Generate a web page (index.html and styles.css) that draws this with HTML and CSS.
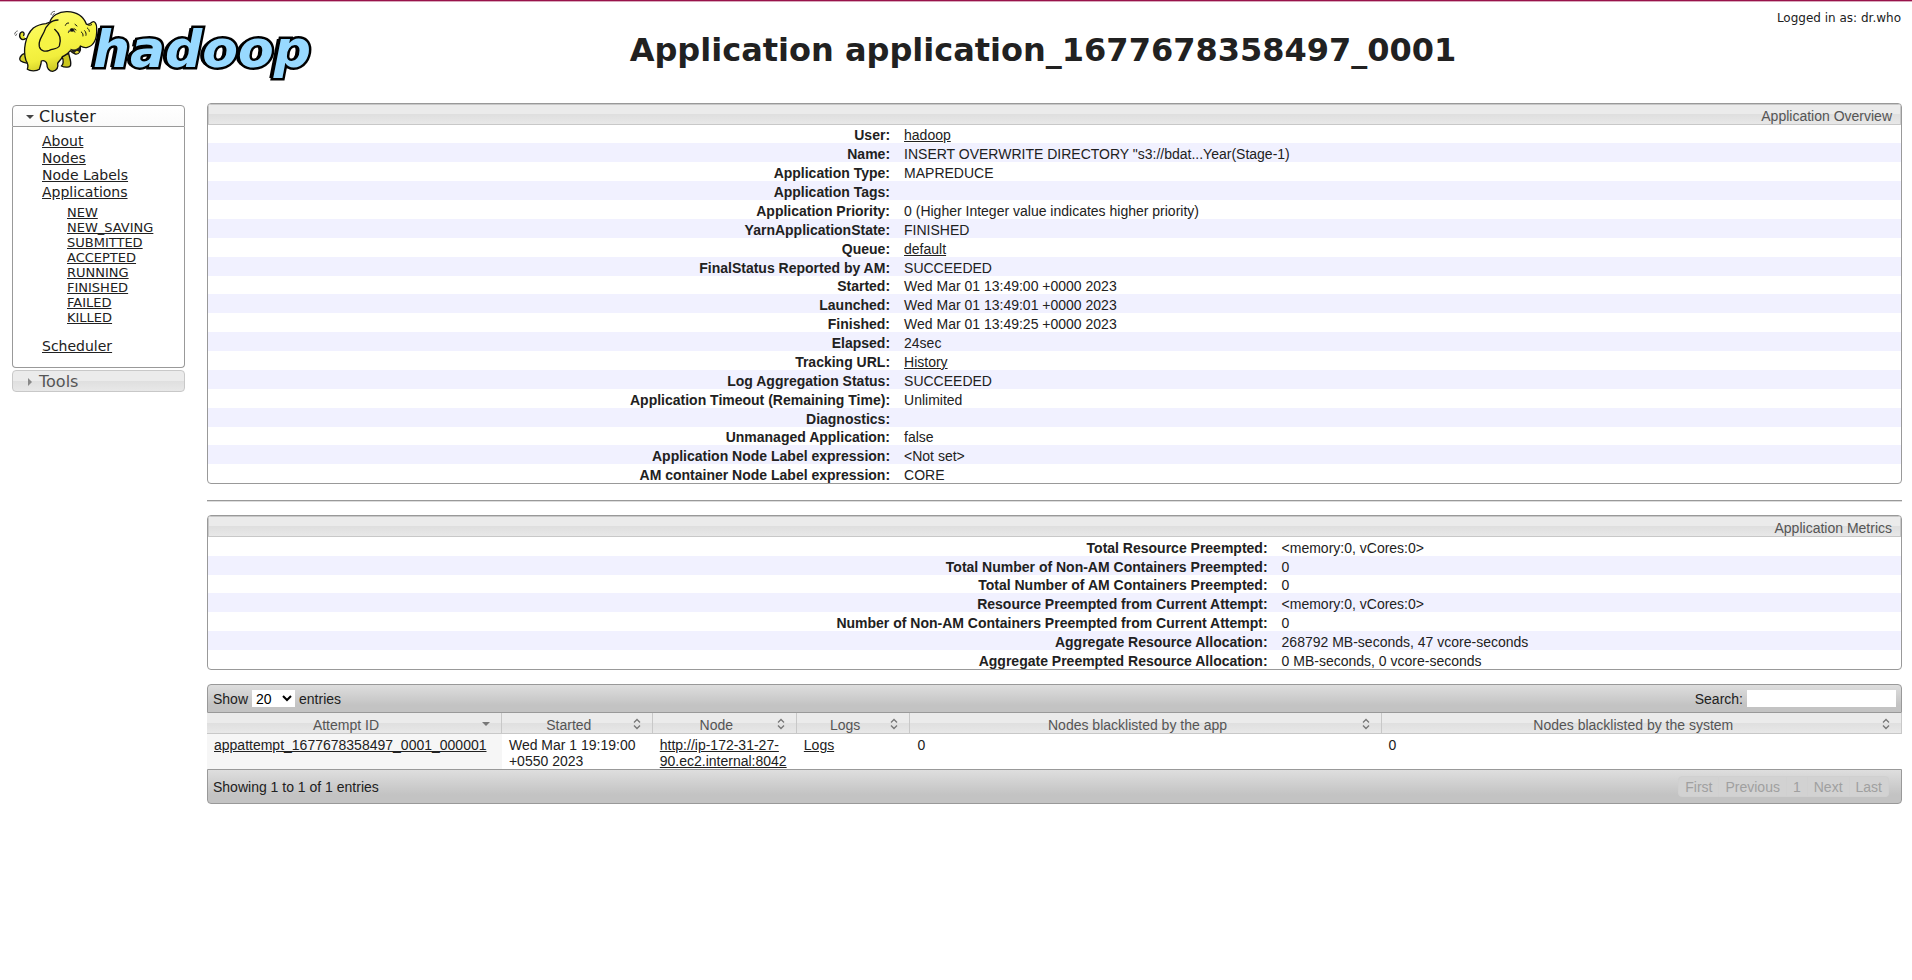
FILE: index.html
```html
<!DOCTYPE html>
<html lang="en">
<head>
<meta charset="utf-8">
<title>Application application_1677678358497_0001</title>
<link rel="stylesheet" href="styles.css">
</head>
<body>
<header class="masthead">
  <a class="logo" href="#" aria-label="Hadoop home">
    <svg class="elephant" viewBox="36 24 270 198" aria-hidden="true">
      <defs>
        <linearGradient id="skin" x1="0" y1="0" x2="0.3" y2="1">
          <stop offset="0" stop-color="#fdfc7a"/>
          <stop offset="0.5" stop-color="#f8f648"/>
          <stop offset="0.8" stop-color="#f1ee3c"/>
          <stop offset="1" stop-color="#cfcb25"/>
        </linearGradient>
      </defs>
      <g stroke="#111" stroke-linejoin="round" stroke-linecap="round">
        <path d="M77 116C64 124 56 112 60 101C65 91 76 97 71 106" fill="#e3e02e" stroke-width="4"/>
        <path d="M76 160C62 162 54 178 64 184C70 189 78 188 84 190Z" fill="#d8d428" stroke-width="4"/>
        <path d="M186 170C192 182 190 194 184 198C196 204 212 202 212 194C214 184 208 172 206 160Z" fill="#c9c51d" stroke-width="4"/>
        <path d="M150 66C154 48 176 34 202 35C228 36 250 48 259 72C264 76 272 70 277 66C284 62 291 72 290 86C292 118 280 138 262 142C254 144 246 141 241 138C243 152 238 164 226 162C218 160 214 156 211 152C200 166 194 166 187 170C184 178 176 184 173 190C176 204 170 211 158 214C148 214 140 204 141 194C140 184 132 180 124 183C124 192 120 200 118 208C110 214 90 214 82 208C86 196 84 190 78 182C68 150 76 106 100 84C112 76 126 72 138 71Z" fill="url(#skin)" stroke-width="4"/>
        <path d="M174 60C154 60 138 76 132 96C126 110 114 122 118 140C122 154 136 156 148 151C158 146 172 148 178 138C184 120 180 102 164 88" fill="#f6f445" stroke-width="4"/>
        <path d="M213 148C224 152 232 148 240 140C242 152 236 162 226 160C218 158 216 154 213 148Z" fill="#222" stroke-width="2"/>
        <path d="M224 158C228 152 234 152 237 156C234 161 228 162 224 158Z" fill="#e8dd3a" stroke="none"/>
        <path d="M205 97C208 84 220 83 225 97C220 90 212 90 205 97Z" fill="#fff" stroke-width="2"/>
        <ellipse cx="216" cy="90" rx="6" ry="5" fill="#111" stroke="none"/>
        <path d="M196 76C198 70 203 68 206 69M225 73L231 78M244 96C248 98 250 104 249 108M254 92C258 96 259 102 258 106M262 84C266 87 268 90 268 94M222 86L228 90M262 74C266 77 270 77 275 74" fill="none" stroke-width="3"/>
        <path d="M153 44C153 38 158 34 164 34M158 46L163 40M44 102C45 97 48 94 52 93M47 107L50 102" fill="none" stroke-width="2"/>
      </g>
    </svg>
    <span class="wordmark">hadoop</span>
  </a>
  <h1 class="title">Application application_1677678358497_0001</h1>
  <div class="user">Logged in as: dr.who</div>
</header>

<div class="page">
  <nav class="sidebar">
    <button class="section open" type="button" aria-expanded="true"><svg class="arrow" viewBox="0 0 8 8" aria-hidden="true"><path d="M0 2h8L4 6z" fill="#444"/></svg>Cluster</button>
    <div class="section-body">
      <ul class="menu">
        <li><a href="#">About</a></li>
        <li><a href="#">Nodes</a></li>
        <li><a href="#">Node Labels</a></li>
        <li><a href="#">Applications</a>
          <ul class="submenu">
            <li><a href="#">NEW</a></li>
            <li><a href="#">NEW_SAVING</a></li>
            <li><a href="#">SUBMITTED</a></li>
            <li><a href="#">ACCEPTED</a></li>
            <li><a href="#">RUNNING</a></li>
            <li><a href="#">FINISHED</a></li>
            <li><a href="#">FAILED</a></li>
            <li><a href="#">KILLED</a></li>
          </ul>
        </li>
        <li><a href="#">Scheduler</a></li>
      </ul>
    </div>
    <button class="section closed" type="button" aria-expanded="false"><svg class="arrow" viewBox="0 0 8 8" aria-hidden="true"><path d="M2 0v8l4-4z" fill="#888"/></svg>Tools</button>
  </nav>

  <main class="content">
    <section class="panel">
      <h2 class="panel-title">Application Overview</h2>
      <table class="facts overview">
        <tbody>
        <tr><th scope="row">User:</th><td><a href="#">hadoop</a></td></tr>
        <tr><th scope="row">Name:</th><td>INSERT OVERWRITE DIRECTORY "s3://bdat...Year(Stage-1)</td></tr>
        <tr><th scope="row">Application Type:</th><td>MAPREDUCE</td></tr>
        <tr><th scope="row">Application Tags:</th><td></td></tr>
        <tr><th scope="row">Application Priority:</th><td>0 (Higher Integer value indicates higher priority)</td></tr>
        <tr><th scope="row">YarnApplicationState:</th><td>FINISHED</td></tr>
        <tr><th scope="row">Queue:</th><td><a href="#">default</a></td></tr>
        <tr><th scope="row">FinalStatus Reported by AM:</th><td>SUCCEEDED</td></tr>
        <tr><th scope="row">Started:</th><td>Wed Mar 01 13:49:00 +0000 2023</td></tr>
        <tr><th scope="row">Launched:</th><td>Wed Mar 01 13:49:01 +0000 2023</td></tr>
        <tr><th scope="row">Finished:</th><td>Wed Mar 01 13:49:25 +0000 2023</td></tr>
        <tr><th scope="row">Elapsed:</th><td>24sec</td></tr>
        <tr><th scope="row">Tracking URL:</th><td><a href="#">History</a></td></tr>
        <tr><th scope="row">Log Aggregation Status:</th><td>SUCCEEDED</td></tr>
        <tr><th scope="row">Application Timeout (Remaining Time):</th><td>Unlimited</td></tr>
        <tr><th scope="row">Diagnostics:</th><td></td></tr>
        <tr><th scope="row">Unmanaged Application:</th><td>false</td></tr>
        <tr><th scope="row">Application Node Label expression:</th><td>&lt;Not set&gt;</td></tr>
        <tr><th scope="row">AM container Node Label expression:</th><td>CORE</td></tr>
        </tbody>
      </table>
    </section>

    <hr class="rule">

    <section class="panel">
      <h2 class="panel-title">Application Metrics</h2>
      <table class="facts metrics">
        <tbody>
        <tr><th scope="row">Total Resource Preempted:</th><td>&lt;memory:0, vCores:0&gt;</td></tr>
        <tr><th scope="row">Total Number of Non-AM Containers Preempted:</th><td>0</td></tr>
        <tr><th scope="row">Total Number of AM Containers Preempted:</th><td>0</td></tr>
        <tr><th scope="row">Resource Preempted from Current Attempt:</th><td>&lt;memory:0, vCores:0&gt;</td></tr>
        <tr><th scope="row">Number of Non-AM Containers Preempted from Current Attempt:</th><td>0</td></tr>
        <tr><th scope="row">Aggregate Resource Allocation:</th><td>268792 MB-seconds, 47 vcore-seconds</td></tr>
        <tr><th scope="row">Aggregate Preempted Resource Allocation:</th><td>0 MB-seconds, 0 vcore-seconds</td></tr>
        </tbody>
      </table>
    </section>

    <section class="attempts">
      <div class="bar bar-top">
        <label class="length">Show
          <select class="length-select"><option>20</option><option>40</option><option>60</option><option>80</option><option>100</option></select>
          entries</label>
        <label class="search">Search: <input class="search-input" type="text"></label>
      </div>
      <table class="grid">
        <colgroup><col class="c-id"><col class="c-started"><col class="c-node"><col class="c-logs"><col class="c-app"><col class="c-system"></colgroup>
        <thead>
          <tr>
            <th scope="col"><div class="head"><span>Attempt ID</span><svg viewBox="0 0 16 16" aria-hidden="true"><path d="M4 5h8l-4 4z" fill="#777"/></svg></div></th>
            <th scope="col"><div class="head"><span>Started</span><svg viewBox="0 0 16 16" aria-hidden="true"><path d="M5 5.500l3-3 3 3M5 8.500l3 3 3-3" fill="none" stroke="#777" stroke-width="1.400"/></svg></div></th>
            <th scope="col"><div class="head"><span>Node</span><svg viewBox="0 0 16 16" aria-hidden="true"><path d="M5 5.500l3-3 3 3M5 8.500l3 3 3-3" fill="none" stroke="#777" stroke-width="1.400"/></svg></div></th>
            <th scope="col"><div class="head"><span>Logs</span><svg viewBox="0 0 16 16" aria-hidden="true"><path d="M5 5.500l3-3 3 3M5 8.500l3 3 3-3" fill="none" stroke="#777" stroke-width="1.400"/></svg></div></th>
            <th scope="col"><div class="head"><span>Nodes blacklisted by the app</span><svg viewBox="0 0 16 16" aria-hidden="true"><path d="M5 5.500l3-3 3 3M5 8.500l3 3 3-3" fill="none" stroke="#777" stroke-width="1.400"/></svg></div></th>
            <th scope="col"><div class="head"><span>Nodes blacklisted by the system</span><svg viewBox="0 0 16 16" aria-hidden="true"><path d="M5 5.500l3-3 3 3M5 8.500l3 3 3-3" fill="none" stroke="#777" stroke-width="1.400"/></svg></div></th>
          </tr>
        </thead>
        <tbody>
          <tr>
            <td class="sorted"><a href="#">appattempt_1677678358497_0001_000001</a></td>
            <td>Wed Mar 1 19:19:00 +0550 2023</td>
            <td><a href="#">http://ip-172-31-27-90.ec2.internal:8042</a></td>
            <td><a href="#">Logs</a></td>
            <td>0</td>
            <td>0</td>
          </tr>
        </tbody>
      </table>
      <div class="bar bar-bottom">
        <div>Showing 1 to 1 of 1 entries</div>
        <div class="pager">
          <button type="button" disabled>First</button>
          <button type="button" disabled>Previous</button>
          <button type="button" disabled>1</button>
          <button type="button" disabled>Next</button>
          <button type="button" disabled>Last</button>
        </div>
      </div>
    </section>
  </main>
</div>
</body>
</html>
```
FILE: styles.css
```css
* { box-sizing: border-box; }

body {
  margin: 0;
  border-top: 1px solid #98134a;
  background: #fff;
  color: #212121;
  font: 14px/16px "Liberation Sans", Arial, sans-serif;
}

a { color: #212121; }

.masthead {
  display: grid;
  grid-template-columns: 207px 1fr;
  align-items: start;
  height: 102px;
  border-top: 1px solid #d9a9bc;
  font-family: "DejaVu Sans", Verdana, sans-serif;
  position: relative;
}

.logo {
  display: flex;
  align-items: flex-start;
  padding: 6px 0 0 12px;
  text-decoration: none;
}

.elephant {
  flex: none;
  width: 90px;
  height: 66px;
  position: relative;
  z-index: 1;
}

.wordmark {
  margin: 15px 0 0 -9px;
  color: #98d9ff;
  font: italic bold 52px/52px "DejaVu Sans", Verdana, sans-serif;
  -webkit-text-stroke: 5px #000;
  paint-order: stroke fill;
  text-shadow: -1px 0 #000, -2px 0 #000, -3px 0 #000, -4px 0 #000;
}

.title {
  margin: 29px 0 0;
  padding-right: 33px;
  text-align: center;
  font-size: 32px;
  line-height: 38px;
}

.user {
  position: absolute;
  top: 8px;
  right: 11px;
  font-size: 12px;
}

.page {
  display: grid;
  grid-template-columns: 173px 1fr;
  column-gap: 22px;
  padding: 0 10px 0 12px;
}

.sidebar {
  padding-top: 2px;
  font-family: "DejaVu Sans", Verdana, sans-serif;
}

.section {
  display: flex;
  align-items: center;
  gap: 5px;
  width: 100%;
  height: 22px;
  padding: 2px 13px 0;
  font: 16px/18px "DejaVu Sans", Verdana, sans-serif;
}

.arrow { width: 8px; height: 8px; }

.open {
  border: 1px solid #999;
  border-radius: 4px 4px 0 0;
  background: linear-gradient(#fff, #fafafa);
  color: #212121;
}

.closed {
  margin-top: 2px;
  border: 1px solid #c8c8c8;
  border-radius: 4px;
  background: linear-gradient(#ebebeb 50%, #dfdfdf 50%, #e8e8e8);
  color: #555;
}

.section-body {
  padding: 6px 0 12px 29px;
  border: 1px solid #999;
  border-top: 0;
  border-radius: 0 0 4px 4px;
}

.menu, .submenu {
  margin: 0;
  padding: 0;
  list-style: none;
}

.menu { line-height: 17px; }

.submenu {
  padding: 4px 0 13px 25px;
  font-size: 13px;
  line-height: 15px;
}

.panel {
  border: 1px solid #999;
  border-radius: 4px;
  overflow: hidden;
}

.panel-title {
  margin: 0;
  padding: 3px 8px 0;
  border: 1px solid #c8c8c8;
  background: linear-gradient(#ebebeb 50%, #dfdfdf 50%, #e8e8e8);
  color: #555;
  font-size: 14px;
  font-weight: normal;
  text-align: right;
}

.facts {
  width: 100%;
  border-collapse: collapse;
}

.facts th, .facts td { padding: 3px 7px 0; }
.facts th { text-align: right; }
.facts tr:nth-child(even) { background: #f1f1ff; }
.overview th { width: 40.7%; }
.metrics th { width: 63%; }

.overview tr:nth-child(8n+1) > *,
.metrics tr:nth-child(3) > * { padding-top: 2px; }

.rule {
  height: 2px;
  margin: 16px 0 13px;
  border: 0;
  border-top: 1px solid #999;
  border-bottom: 1px solid #ddd;
}

.attempts { margin-top: 14px; }

.bar {
  display: flex;
  align-items: center;
  justify-content: space-between;
  border: 1px solid #999;
  background: linear-gradient(#dedede, #c3c3c3 75%, #c3c3c3);
}

.bar-top {
  height: 29px;
  padding: 0 5px;
  border-radius: 4px 4px 0 0;
}

.length, .search {
  display: flex;
  align-items: center;
  gap: 4px;
}

.length-select {
  width: 43px;
  height: 17px;
  padding: 0;
  border: 0;
  background: #fff;
  color: #000;
  font: 14px/17px "Liberation Sans", Arial, sans-serif;
}

.search-input {
  width: 149px;
  height: 17px;
  padding: 0;
  border: 0;
  background: #fff;
}

.grid {
  width: 100%;
  border-collapse: separate;
  border-spacing: 0;
  table-layout: fixed;
}

.c-id { width: 17.4%; }
.c-started { width: 8.9%; }
.c-node { width: 8.5%; }
.c-logs { width: 6.7%; }
.c-app { width: 27.8%; }
.c-system { width: 30.7%; }

.grid th {
  padding: 4px 7px 0;
  border-right: 1px solid #c8c8c8;
  border-bottom: 1px solid #c8c8c8;
  background: linear-gradient(#ebebeb 50%, #dfdfdf 50%, #e8e8e8);
  color: #555;
  font-weight: normal;
}

.head {
  display: grid;
  grid-template-columns: 1fr 16px;
  height: 16px;
}

.grid td {
  padding: 3px 6px 0 7px;
  vertical-align: top;
}

.grid .sorted { background: #f6f6f6; }

.bar-bottom {
  height: 35px;
  padding: 0 12px 0 5px;
  border-radius: 0 0 4px 4px;
}

.pager { display: flex; }

.pager button {
  height: 21px;
  padding: 0 6px;
  border: 1px solid #d0d0d0;
  border-left-width: 0;
  background: #d2d2d2;
  color: #a0a0a0;
  font: 14px/16px "Liberation Sans", Arial, sans-serif;
}

.pager button:first-child { border-left-width: 1px; border-radius: 4px 0 0 4px; }
.pager button:last-child { border-radius: 0 4px 4px 0; }
```
